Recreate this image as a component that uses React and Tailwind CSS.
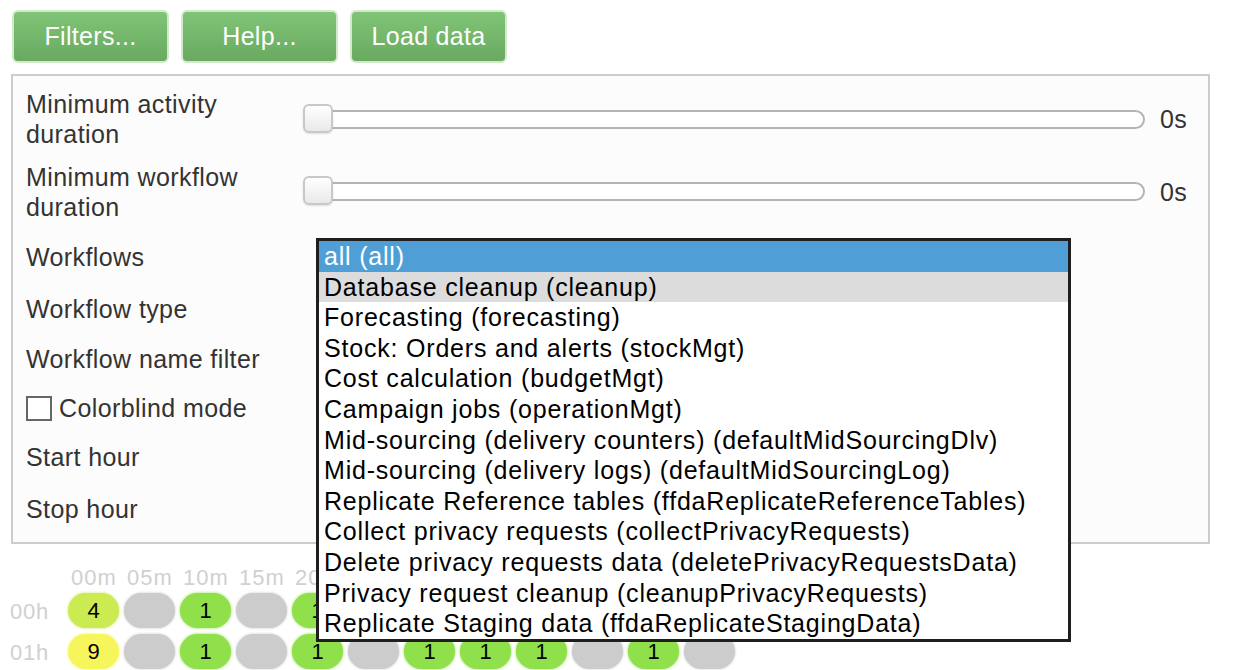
import React from "react";

const font = { fontFamily: '"Liberation Sans", Arial, sans-serif' };

function Slider() {
  return (
    <div className="flex items-center">
      <div className="relative w-[842px] h-[19px] rounded-full border-2 border-[#b4b4b4] bg-white">
        <div className="absolute left-[-2px] top-[-8px] w-[30px] h-[29px] rounded-[6px] border-2 border-[#c8c8c8] bg-gradient-to-b from-white to-[#e9e9e9] shadow-[0_1px_2px_rgba(0,0,0,0.12)]" />
      </div>
      <div className="ml-[15px] text-[25px] leading-[30px] tracking-[0.4px] text-[#333]">0s</div>
    </div>
  );
}

const items = [
  "all (all)",
  "Database cleanup (cleanup)",
  "Forecasting (forecasting)",
  "Stock: Orders and alerts (stockMgt)",
  "Cost calculation (budgetMgt)",
  "Campaign jobs (operationMgt)",
  "Mid-sourcing (delivery counters) (defaultMidSourcingDlv)",
  "Mid-sourcing (delivery logs) (defaultMidSourcingLog)",
  "Replicate Reference tables (ffdaReplicateReferenceTables)",
  "Collect privacy requests (collectPrivacyRequests)",
  "Delete privacy requests data (deletePrivacyRequestsData)",
  "Privacy request cleanup (cleanupPrivacyRequests)",
  "Replicate Staging data (ffdaReplicateStagingData)",
];

const C = { y: "#ccea52", Y: "#f6f65c", g: "#8fe04a", n: "#cccccc" };
const row1 = [["y", "4"], ["n", ""], ["g", "1"], ["n", ""], ["g", "1"], ["n", ""], ["g", "1"], ["g", "1"], ["g", "1"], ["n", ""], ["g", "1"], ["n", ""]];
const row2 = [["Y", "9"], ["n", ""], ["g", "1"], ["n", ""], ["g", "1"], ["n", ""], ["g", "1"], ["g", "1"], ["g", "1"], ["n", ""], ["g", "1"], ["n", ""]];
const headers = ["00m", "05m", "10m", "15m", "20m", "25m", "30m", "35m", "40m", "45m", "50m", "55m"];

function Pill({ c, v }) {
  const col = C[c];
  return (
    <div className="w-[56px] pt-[2px]">
      <div
        className="ml-[2px] w-[51px] h-[35px] rounded-full flex items-center justify-center text-[22px] text-black"
        style={{ backgroundColor: col, boxShadow: `0 0 3px ${col}` }}
      >
        {v}
      </div>
    </div>
  );
}

function Row({ label, h, children }) {
  return (
    <div className="flex items-center" style={{ height: h }}>
      <div className="w-[277px] text-[25px] leading-[30px] tracking-[0.4px] text-[#333]">{label}</div>
      <div className="flex-1">{children}</div>
    </div>
  );
}

export default function App() {
  return (
    <div className="relative w-[1236px] h-[670px] overflow-hidden bg-white" style={font}>
      <div className="flex gap-[12px] pl-[12px] pt-[10px]">
        {["Filters...", "Help...", "Load data"].map((t) => (
          <button
            key={t}
            className="w-[157px] h-[53px] rounded-[6px] border-2 border-[#d2eacb] bg-gradient-to-b from-[#80c577] to-[#69a960] text-white text-[25px] tracking-[0.3px] flex items-center justify-center"
          >
            {t}
          </button>
        ))}
      </div>

      <div className="ml-[11px] mt-[11px] w-[1199px] border-2 border-[#cccccc] bg-[#fcfcfc] pl-[13px] pt-[7px] pb-[8px]">
        <Row label={<>Minimum activity<br />duration</>} h={72}>
          <Slider />
        </Row>
        <Row label={<>Minimum workflow<br />duration</>} h={73}>
          <Slider />
        </Row>
        <Row label="Workflows" h={58} />
        <Row label="Workflow type" h={46} />
        <Row label="Workflow name filter" h={54} />
        <div className="flex items-center h-[44px]">
          <div className="w-[26px] h-[25px] border-2 border-[#666] bg-white" />
          <div className="ml-[7px] text-[25px] leading-[30px] tracking-[0.4px] text-[#333]">Colorblind mode</div>
        </div>
        <Row label="Start hour" h={54} />
        <Row label="Stop hour" h={50} />
      </div>

      <div className="pl-[10px] mt-[19px] text-[22px]">
        <div className="flex h-[28px] items-center">
          <div className="w-[56px]" />
          {headers.map((h) => (
            <div key={h} className="w-[56px] text-center tracking-[1px] text-[#d0d0d0]">{h}</div>
          ))}
        </div>
        {[["00h", row1], ["01h", row2]].map(([lab, r]) => (
          <div key={lab} className="flex h-[41px]">
            <div className="w-[56px] flex items-center tracking-[0.8px] text-[#d0d0d0]">{lab}</div>
            {r.map(([c, v], i) => (
              <Pill key={i} c={c} v={v} />
            ))}
          </div>
        ))}
      </div>

      <div className="absolute left-[316px] top-[238px] w-[755px] border-[3px] border-[#1e1e1e] bg-white">
        {items.map((t, i) => (
          <div
            key={t}
            className={
              "h-[30.6px] pl-[5px] text-[25px] leading-[30.6px] tracking-[0.8px] whitespace-nowrap " +
              (i === 0 ? "bg-[#4f9fd6] text-white" : i === 1 ? "bg-[#dcdcdc] text-black" : "text-black")
            }
          >
            {t}
          </div>
        ))}
      </div>
    </div>
  );
}
